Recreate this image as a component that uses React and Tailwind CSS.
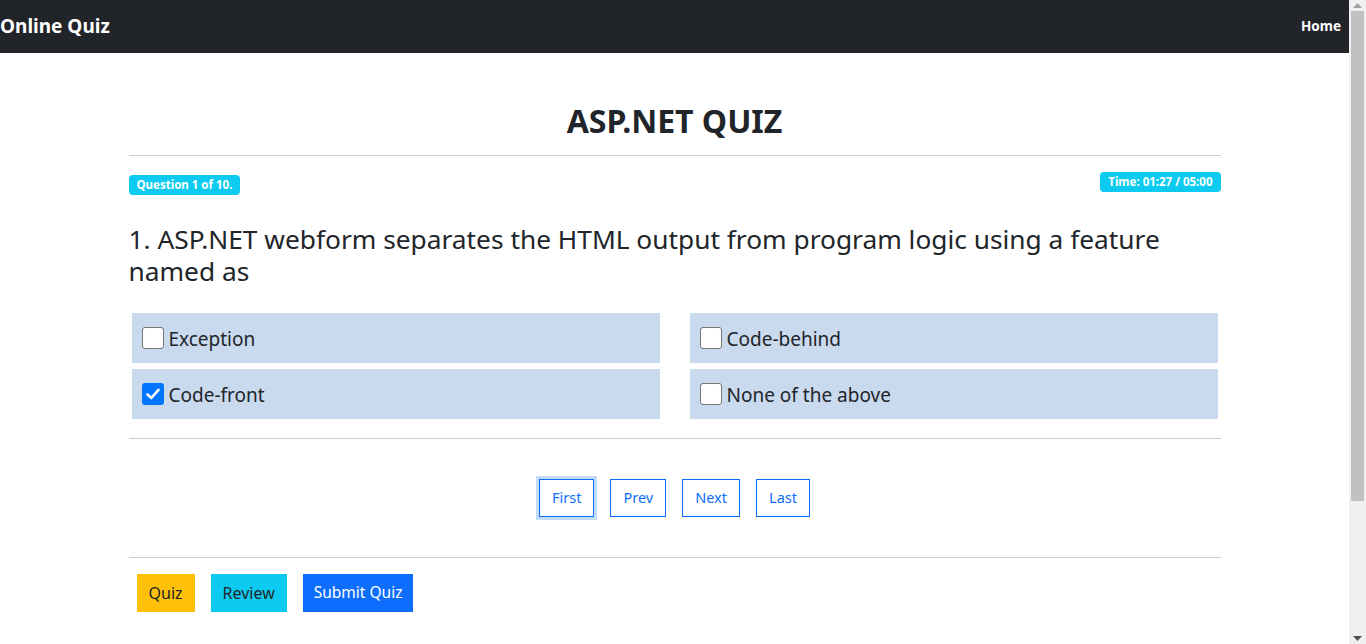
import { useState } from 'react';

const font = { fontFamily: '"Noto Sans", "Open Sans", sans-serif' };

const Box = ({ checked }) =>
    checked ? (
        <span className="w-[22px] h-[22px] rounded-[3px] bg-[#0075ff] flex items-center justify-center shrink-0">
            <svg width="16" height="16" viewBox="0 0 16 16">
                <path d="M2.5 8.5 L6.3 12 L13.5 3.8" fill="none" stroke="white" strokeWidth="2.6" strokeLinecap="round" strokeLinejoin="round" />
            </svg>
        </span>
    ) : (
        <span className="w-[22px] h-[22px] rounded-[3px] bg-white border border-[#767676] shrink-0"></span>
    );

const Option = ({ label, checked }) => (
    <div className="bg-[#c9d9ee] h-[50px] flex items-center pl-[10px] gap-[5px]">
        <Box checked={checked} />
        <span className="text-[19px] text-[#212529] mt-[3px]">{label}</span>
    </div>
);

const PageBtn = ({ label, focus }) => (
    <button
        className={`h-[38px] px-[12px] border border-[#0d6efd] text-[#0d6efd] text-[14.5px] bg-white ${focus ? 'ring-[3px] ring-[#0d6efd]/25' : ''}`}
    >
        {label}
    </button>
);

export default function App() {
    const [answers] = useState({ 'Code-front': true });
    const options = ['Exception', 'Code-behind', 'Code-front', 'None of the above'];

    return (
        <div className="h-screen flex overflow-hidden bg-white" style={font}>
            <div className="flex-1 min-w-0">
                {/* Navbar */}
                <nav className="bg-[#212529] h-[53px] flex items-center justify-between">
                    <span className="text-white text-[19px] font-bold">Online Quiz</span>
                    <span className="text-white text-[13.5px] font-bold pr-[8px]">Home</span>
                </nav>

                <div className="w-[1092px] mx-auto">
                    <h1 className="text-center text-[32px] font-bold text-[#212529] pt-[46px] leading-[44px]">ASP.NET QUIZ</h1>
                    <hr className="mt-[12px] border-[#cccccc]" />

                    <div className="flex justify-between mt-[16px]">
                        <span className="mt-[3px] h-[20px] px-[8px] rounded-[4px] bg-[#0dcaf0] text-white text-[11.5px] font-bold flex items-center">Question 1 of 10.</span>
                        <span className="h-[20px] px-[8px] rounded-[4px] bg-[#0dcaf0] text-white text-[11.5px] font-bold flex items-center">Time: 01:27 / 05:00</span>
                    </div>

                    <p className="text-[26.3px] text-[#212529] leading-[32px] mt-[28px]">
                        1. ASP.NET webform separates the HTML output from program logic using a feature named as
                    </p>

                    <div className="grid grid-cols-2 gap-x-[30px] gap-y-[6px] px-[3px] mt-[26px]">
                        {options.map((o) => (
                            <Option key={o} label={o} checked={!!answers[o]} />
                        ))}
                    </div>

                    <hr className="mt-[19px] border-[#cccccc]" />

                    <div className="flex justify-center gap-[16px] mt-[40px]">
                        <PageBtn label="First" focus />
                        <PageBtn label="Prev" />
                        <PageBtn label="Next" />
                        <PageBtn label="Last" />
                    </div>

                    <hr className="mt-[40px] border-[#cccccc]" />

                    <div className="flex gap-[16px] pl-[8px] mt-[16px]">
                        <button className="h-[38px] px-[12px] bg-[#ffc107] text-[16px] text-[#212529]">Quiz</button>
                        <button className="h-[38px] px-[12px] bg-[#0dcaf0] text-[16px] text-[#212529]">Review</button>
                        <button className="h-[38px] px-[11px] bg-[#0d6efd] text-[15.5px] text-white">Submit Quiz</button>
                    </div>
                </div>
            </div>

            {/* Scrollbar */}
            <div className="w-[17px] shrink-0 bg-[#f0f0f0] flex flex-col items-center">
                <div className="h-[11px] flex items-center justify-center">
                    <svg width="9" height="5" viewBox="0 0 9 5"><path d="M0 5 L4.5 0 L9 5 Z" fill="#a3a3a3" /></svg>
                </div>
                <div className="w-[13px] h-[490px] bg-[#c1c1c1]"></div>
                <div className="flex-1"></div>
                <div className="h-[11px] flex items-center justify-center">
                    <svg width="9" height="5" viewBox="0 0 9 5"><path d="M0 0 L4.5 5 L9 0 Z" fill="#505050" /></svg>
                </div>
            </div>
        </div>
    );
}
